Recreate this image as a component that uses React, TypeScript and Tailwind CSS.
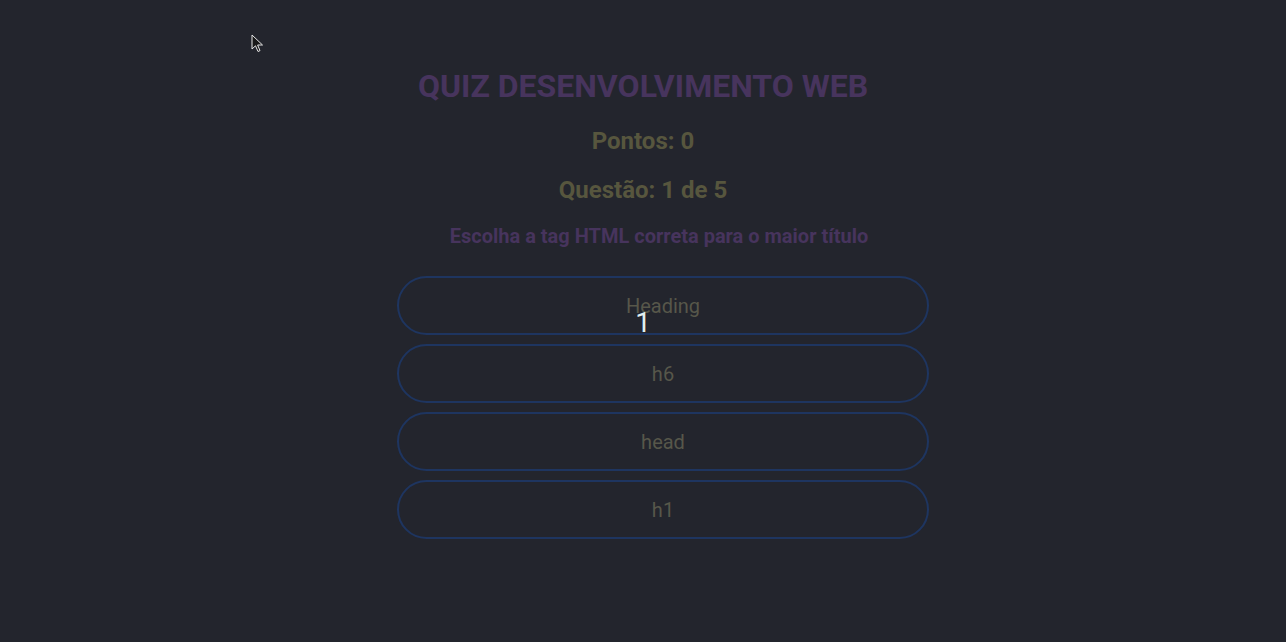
import React from 'react';

const answers = ['Heading', 'h6', 'head', 'h1'];

export default function App() {
  return (
    <div className="relative min-h-[642px] w-full bg-[#23252d] font-['Roboto',sans-serif] overflow-hidden">
      {/* mouse cursor */}
      <svg className="absolute left-[251px] top-[34px]" width="13" height="20" viewBox="0 0 13 20">
        <path d="M1 1 L1 15 L4.5 11.8 L7 17.5 L9 16.6 L6.6 11 L11.5 11 Z" fill="#1a1a1a" stroke="#e6e6e6" strokeWidth="1" />
      </svg>

      <div className="flex flex-col items-center pt-[66px]">
        <h1 className="text-[32px] leading-[40px] font-bold text-[#47345d]">QUIZ DESENVOLVIMENTO WEB</h1>
        <h2 className="mt-[20px] text-[24px] leading-[30px] font-bold text-[#57563e]">Pontos: 0</h2>
        <h2 className="mt-[19px] text-[24px] leading-[30px] font-bold text-[#57563e]">Questão: 1 de 5</h2>
        <h3 className="ml-[32px] mt-[19px] text-[20px] leading-[24px] font-bold text-[#47345d]">
          Escolha a tag HTML correta para o maior título
        </h3>
        <div className="ml-[40px] mt-[28px] flex w-[532px] flex-col gap-[9px]">
          {answers.map((a) => (
            <button
              key={a}
              className="h-[59px] w-full rounded-full border-2 border-[#1e3560] bg-transparent text-[20px] text-[#57574a]"
            >
              {a}
            </button>
          ))}
        </div>
      </div>

      {/* countdown */}
      <div className="absolute left-1/2 top-[calc(50%+2px)] -translate-x-1/2 -translate-y-1/2 text-[28px] font-normal leading-none text-[#e0f0f0]">
        1
      </div>
    </div>
  );
}
